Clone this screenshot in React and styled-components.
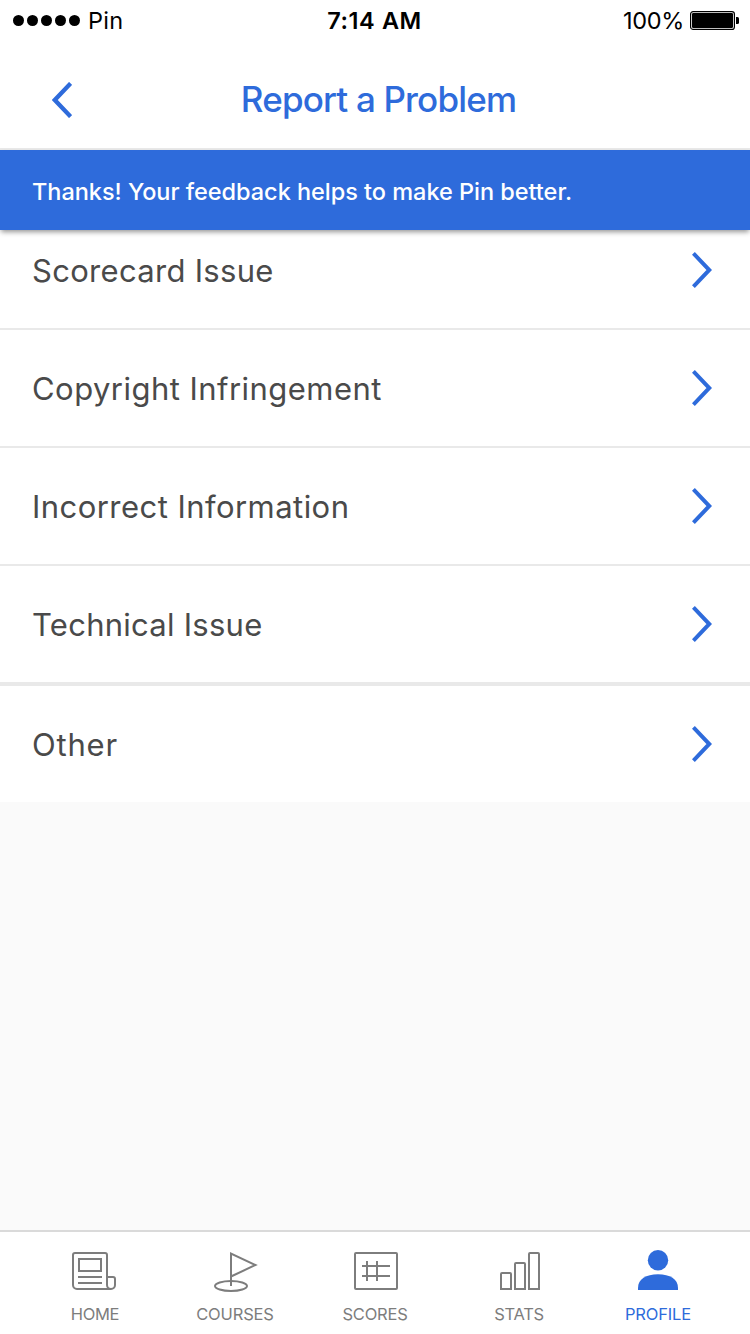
import React from "react";
import styled, { createGlobalStyle } from "styled-components";

const BLUE = "#2e6bdb";

const GlobalStyle = createGlobalStyle`
  *, *::before, *::after { box-sizing: border-box; }
  body { margin: 0; background: #fafafa; }
`;

const Screen = styled.div`
  width: 750px;
  height: 1334px;
  display: flex;
  flex-direction: column;
  overflow: hidden;
  background: #fafafa;
  font-family: Inter, "Liberation Sans", sans-serif;
`;

const StatusBar = styled.div`
  height: 40px;
  flex: none;
  display: grid;
  grid-template-columns: 1fr auto 1fr;
  align-items: center;
  padding: 1px 11px 0 10px;
  background: #fff;
  color: #000;
`;

const StatusGroup = styled.div`
  display: flex;
  align-items: center;
  justify-content: ${(p) => (p.$end ? "flex-end" : "flex-start")};
  gap: ${(p) => p.$gap}px;
  padding-left: ${(p) => (p.$end ? 0 : 3)}px;
`;

const StatusText = styled.span`
  font-size: 23.5px;
  line-height: 28px;
  white-space: nowrap;
  font-weight: ${(p) => p.$weight || 400};
  letter-spacing: ${(p) => p.$spacing || 0}px;
`;

const NavBar = styled.header`
  height: 110px;
  flex: none;
  display: grid;
  grid-template-columns: 124px 1fr 124px;
  align-items: center;
  padding-top: 12px;
  background: #fff;
  border-bottom: 2px solid #e9e9e9;
`;

const BackButton = styled.button`
  display: flex;
  padding: 0 0 0 52px;
  border: 0;
  background: none;
`;

const Title = styled.h1`
  margin: 0;
  padding: 0 0 2px 7px;
  text-align: center;
  color: ${BLUE};
  font-size: 35px;
  line-height: 44px;
  font-weight: 500;
  letter-spacing: -0.83px;
  white-space: nowrap;
`;

const Banner = styled.div`
  position: relative;
  z-index: 1;
  height: 80px;
  flex: none;
  display: flex;
  align-items: center;
  padding: 2px 32px 0;
  background: ${BLUE};
  color: #fff;
  font-size: 23.5px;
  font-weight: 500;
  letter-spacing: -0.03px;
  white-space: nowrap;
  box-shadow: 0 3px 5px -1px rgba(0, 0, 0, 0.42);
`;

/* The list is scrolled slightly, so its first row starts beneath the banner. */
const List = styled.ul`
  flex: 1;
  margin: -18px 0 0;
  padding: 0;
  list-style: none;
`;

const Row = styled.li`
  display: flex;
  align-items: center;
  justify-content: space-between;
  height: ${(p) => 116 + p.$divider}px;
  padding: 0 38px 0 32px;
  background: #fff;
  border-bottom: ${(p) => p.$divider}px solid #e9e9e9;
`;

const RowLabel = styled.span`
  padding-top: 2px;
  color: #4a4a4a;
  font-size: 31px;
  line-height: 40px;
  letter-spacing: ${(p) => p.$spacing}px;
  white-space: nowrap;
`;

const TabBar = styled.nav`
  height: 104px;
  flex: none;
  display: grid;
  grid-template-columns: 140px 140px 140px 148px 130px;
  padding: 16px 0 0 25px;
  background: #fff;
  border-top: 2px solid #dadada;
`;

const Tab = styled.div`
  display: flex;
  flex-direction: column;
  align-items: center;
  gap: 12px;
  color: ${(p) => (p.$active ? BLUE : "#7d7d7d")};
`;

const TabLabel = styled.span`
  font-size: 16.5px;
  line-height: 20px;
  letter-spacing: ${(p) => p.$spacing}px;
  white-space: nowrap;
`;

const Glyph = styled.svg`
  display: block;
  flex: none;
`;

const SignalDots = () => (
  <Glyph width="67" height="12" viewBox="0 0 67 12">
    {[5.5, 19.5, 33.5, 47.5, 61.5].map((x) => (
      <circle key={x} cx={x} cy="5.5" r="5.5" />
    ))}
  </Glyph>
);

const Battery = () => (
  <Glyph width="49" height="19" viewBox="0 0 49 19">
    <rect x="0.6" y="0.6" width="43.8" height="17.8" rx="2.5" fill="none" stroke="#000" strokeWidth="1.2" />
    <rect x="2" y="2" width="41" height="15" rx="1.2" />
    <path d="M46 6h1.5a1.5 1.5 0 0 1 1.5 1.5v4a1.5 1.5 0 0 1-1.5 1.5H46z" />
  </Glyph>
);

const Chevron = ({ back }) => (
  <Glyph width="20" height="36" viewBox="0 0 20 36" fill="none" stroke={BLUE}>
    {back ? (
      <path d="M18.6 1.4L2.8 18l15.8 16.6" strokeWidth="4.3" />
    ) : (
      <path d="M1.4 1.4L17.3 18 1.4 34.6" strokeWidth="4" />
    )}
  </Glyph>
);

const TabIcon = ({ children, solid }) => (
  <Glyph
    width="48"
    height="44"
    viewBox="0 0 48 44"
    fill={solid ? "currentColor" : "none"}
    stroke={solid ? "none" : "currentColor"}
    strokeWidth="2"
  >
    {children}
  </Glyph>
);

const rows = [
  { label: "Scorecard Issue", divider: 2, spacing: 0.3 },
  { label: "Copyright Infringement", divider: 2, spacing: 0.46 },
  { label: "Incorrect Information", divider: 2, spacing: 0.45 },
  { label: "Technical Issue", divider: 4, spacing: 0.26 },
  { label: "Other", divider: 0, spacing: 0.8 },
];

const tabs = [
  {
    label: "HOME",
    spacing: -0.3,
    icon: (
      <TabIcon>
        <path d="M40 41H6a4 4 0 0 1-4-4V7a2 2 0 0 1 2-2h30a2 2 0 0 1 2 2v30a4 4 0 0 0 8 0v-6a2 2 0 0 0-2-2h-6" />
        <path d="M8 11h22v12H8zM7 29h24M7 35h24" />
      </TabIcon>
    ),
  },
  {
    label: "COURSES",
    spacing: -0.15,
    icon: (
      <TabIcon>
        <path d="M20 38V5.5L44.5 17 20 28.5" />
        <ellipse cx="20" cy="38" rx="16" ry="5" />
      </TabIcon>
    ),
  },
  {
    label: "SCORES",
    spacing: -0.2,
    icon: (
      <TabIcon>
        <rect x="4" y="5" width="42" height="36" rx="1" />
        <path d="M11 18h28M11 28h28M16 13v20M26 13v20" />
      </TabIcon>
    ),
  },
  {
    label: "STATS",
    spacing: -0.3,
    icon: (
      <TabIcon>
        <path d="M6 41V26a1 1 0 0 1 1-1h8a1 1 0 0 1 1 1v15zM20 41V16a1 1 0 0 1 1-1h8a1 1 0 0 1 1 1v25zM34 41V6a1 1 0 0 1 1-1h8a1 1 0 0 1 1 1v35z" />
      </TabIcon>
    ),
  },
  {
    label: "PROFILE",
    spacing: -0.15,
    active: true,
    icon: (
      <TabIcon solid>
        <circle cx="24" cy="12.3" r="10.2" />
        <path d="M4 42v-2C4 31 12 26.2 24 26.2S44 31 44 40v2z" />
      </TabIcon>
    ),
  },
];

export default function App() {
  return (
    <Screen>
      <GlobalStyle />
      <StatusBar>
        <StatusGroup $gap={8}>
          <SignalDots />
          <StatusText $spacing={0.3}>Pin</StatusText>
        </StatusGroup>
        <StatusText $weight={600} $spacing={0.6}>
          7:14 AM
        </StatusText>
        <StatusGroup $gap={6} $end>
          <StatusText $spacing={-0.3}>100%</StatusText>
          <Battery />
        </StatusGroup>
      </StatusBar>
      <NavBar>
        <BackButton aria-label="Back">
          <Chevron back />
        </BackButton>
        <Title>Report a Problem</Title>
      </NavBar>
      <Banner>Thanks! Your feedback helps to make Pin better.</Banner>
      <List>
        {rows.map((r) => (
          <Row key={r.label} $divider={r.divider}>
            <RowLabel $spacing={r.spacing}>{r.label}</RowLabel>
            <Chevron />
          </Row>
        ))}
      </List>
      <TabBar>
        {tabs.map((t) => (
          <Tab key={t.label} $active={t.active}>
            {t.icon}
            <TabLabel $spacing={t.spacing}>{t.label}</TabLabel>
          </Tab>
        ))}
      </TabBar>
    </Screen>
  );
}
